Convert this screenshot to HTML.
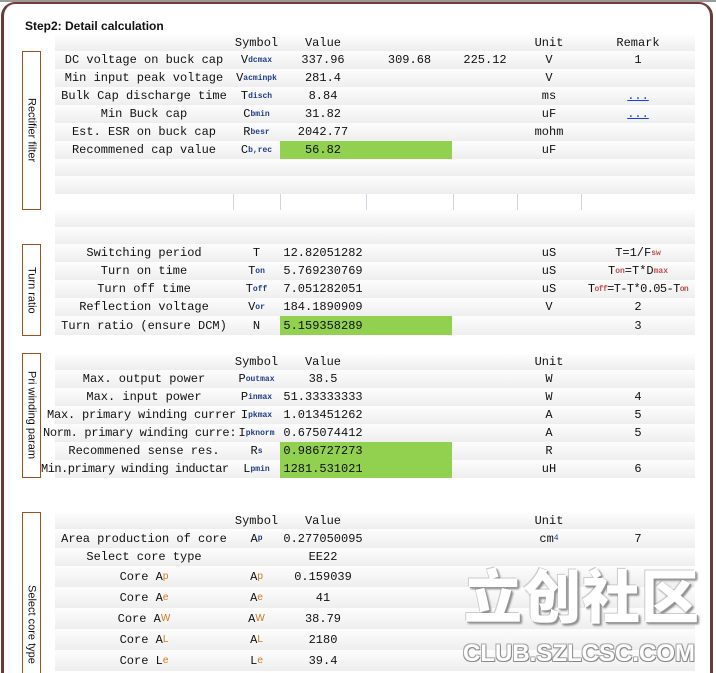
<!DOCTYPE html>
<html><head><meta charset="utf-8">
<style>
*{margin:0;padding:0;box-sizing:border-box}
html,body{width:716px;height:673px;overflow:hidden}
body{background:#fff;position:relative;font-family:"Liberation Mono","Noto Sans CJK SC",monospace;font-size:12px;color:#111}
.frame{position:absolute;left:0;top:0;width:716px;height:673px;border-top:2px solid #9a9a9a}
.win{position:absolute;left:1px;top:2px;width:712px;height:671px;border-left:3px solid #6b3a36;border-right:3px solid #6b3a36;border-top:2px solid #7a3a36;border-radius:14px 14px 0 0;background:#fff}
.title{position:absolute;left:25px;top:19px;font-family:"Liberation Sans",sans-serif;font-weight:bold;font-size:12px;color:#111}
.box{position:absolute;left:22px;width:19px;border:1px solid #a0501a;background:#fff;overflow:hidden;display:flex;justify-content:center;align-items:center}
.box span{writing-mode:vertical-rl;white-space:nowrap;font-family:"Liberation Sans",sans-serif;font-size:11px;color:#111}
.r{position:absolute;left:55px;width:640px;height:18px;background:linear-gradient(#fdfdfd,#eeeeee)}
.c{position:absolute;top:0;height:100%;display:flex;align-items:center;justify-content:center;white-space:nowrap}
.l{left:0;width:178px}.s{left:178px;width:47px}.v{left:225px;width:86px}.v2{left:311px;width:87px}.v3{left:398px;width:64px}.u{left:462px;width:64px}.k{left:526px;width:114px}
.ll{justify-content:flex-start;width:auto}
.g{position:absolute;left:225px;top:0;width:172px;height:100%;background:#92d050}
sub{font-size:8px;color:#1f3c88;font-weight:bold;vertical-align:-3px}
.cs sub{font-family:"Liberation Sans",sans-serif;font-weight:normal;font-size:10px;color:#d07a1a}
.rm sub{color:#c0504d}
a{color:#1a3fdc;text-decoration:underline}
.vl{position:absolute;top:0;width:1px;height:16px;background:#d0d6e0}
.wm{position:absolute;z-index:3;left:464px;top:560px;font-family:"Noto Sans CJK SC",sans-serif;font-weight:900;font-size:58px;color:#fff;letter-spacing:1px;text-shadow:1px 1px 0 #999,2px 2px 2px #777,-1px -1px 0 #ccc;line-height:66px}
.wm2{position:absolute;z-index:3;left:463px;top:640px;font-family:"Liberation Sans",sans-serif;font-weight:bold;font-size:24px;line-height:28px;color:#fff;text-shadow:1px 1px 0 #888,-1px -1px 0 #aaa,1px -1px 0 #aaa,-1px 1px 0 #999}
</style></head><body>
<div class="frame"></div>
<div class="win"></div>
<div class="title">Step2: Detail calculation</div>

<div class="box" style="top:51px;height:159px"><span>Rectifier filter</span></div>
<div class="box" style="top:244px;height:92px"><span>Turn ratio</span></div>
<div class="box" style="top:353px;height:125px"><span>Pri winding param</span></div>
<div class="box" style="top:512px;height:161px;border-bottom:none;align-items:flex-start;padding-top:72px"><span>Select core type</span></div>

<!-- section 1 -->
<div class="r" style="top:35px;height:16px"><div class="c s">Symbol</div><div class="c v">Value</div><div class="c u">Unit</div><div class="c k">Remark</div></div>
<div class="r" style="top:51px"><div class="c l">DC voltage on buck cap</div><div class="c s">V<sub>dcmax</sub></div><div class="c v">337.96</div><div class="c v2">309.68</div><div class="c v3">225.12</div><div class="c u">V</div><div class="c k">1</div></div>
<div class="r" style="top:69px"><div class="c l">Min input peak voltage</div><div class="c s">V<sub>acminpk</sub></div><div class="c v">281.4</div><div class="c u">V</div></div>
<div class="r" style="top:87px"><div class="c l">Bulk Cap discharge time</div><div class="c s">T<sub>disch</sub></div><div class="c v">8.84</div><div class="c u">ms</div><div class="c k"><a>...</a></div></div>
<div class="r" style="top:105px"><div class="c l">Min Buck cap</div><div class="c s">C<sub>bmin</sub></div><div class="c v">31.82</div><div class="c u">uF</div><div class="c k"><a>...</a></div></div>
<div class="r" style="top:123px"><div class="c l">Est. ESR on buck cap</div><div class="c s">R<sub>besr</sub></div><div class="c v">2042.77</div><div class="c u">mohm</div></div>
<div class="r" style="top:141px"><div class="g"></div><div class="c l">Recommened cap value</div><div class="c s">C<sub>b,rec</sub></div><div class="c v">56.82</div><div class="c u">uF</div></div>
<div class="r" style="top:159px;height:17px"></div>
<div class="r" style="top:176px;height:18px"></div>
<div class="r" style="top:194px;height:16px;background:#fff"><div class="vl" style="left:178px"></div><div class="vl" style="left:225px"></div><div class="vl" style="left:311px"></div><div class="vl" style="left:398px"></div><div class="vl" style="left:462px"></div><div class="vl" style="left:526px"></div></div>
<div class="r" style="top:210px;height:17px"></div>
<div class="r" style="top:227px;height:17px"></div>

<!-- section 2 -->
<div class="r" style="top:244px"><div class="c l">Switching period</div><div class="c s">T</div><div class="c v">12.82051282</div><div class="c u">uS</div><div class="c k rm">T=1/F<sub>sw</sub></div></div>
<div class="r" style="top:262px"><div class="c l">Turn on time</div><div class="c s">T<sub>on</sub></div><div class="c v">5.769230769</div><div class="c u">uS</div><div class="c k rm">T<sub>on</sub>=T*D<sub>max</sub></div></div>
<div class="r" style="top:280px"><div class="c l">Turn off time</div><div class="c s">T<sub>off</sub></div><div class="c v">7.051282051</div><div class="c u">uS</div><div class="c k rm" style="letter-spacing:-0.6px">T<sub>off</sub>=T-T*0.05-T<sub>on</sub></div></div>
<div class="r" style="top:298px"><div class="c l">Reflection voltage</div><div class="c s">V<sub>or</sub></div><div class="c v">184.1890909</div><div class="c u">V</div><div class="c k">2</div></div>
<div class="r" style="top:316px;height:19px"><div class="g"></div><div class="c l">Turn ratio (ensure DCM)</div><div class="c s">N</div><div class="c v">5.159358289</div><div class="c k">3</div></div>

<!-- section 3 -->
<div class="r" style="top:354px;height:16px"><div class="c s">Symbol</div><div class="c v">Value</div><div class="c u">Unit</div></div>
<div class="r" style="top:370px"><div class="c l">Max. output power</div><div class="c s">P<sub>outmax</sub></div><div class="c v">38.5</div><div class="c u">W</div></div>
<div class="r" style="top:388px"><div class="c l">Max. input power</div><div class="c s">P<sub>inmax</sub></div><div class="c v">51.33333333</div><div class="c u">W</div><div class="c k">4</div></div>
<div class="r" style="top:406px"><div class="c l ll" style="left:-8px;letter-spacing:-0.2px">Max. primary winding currer</div><div class="c s">I<sub>pkmax</sub></div><div class="c v">1.013451262</div><div class="c u">A</div><div class="c k">5</div></div>
<div class="r" style="top:424px"><div class="c l ll" style="left:-12px;letter-spacing:-0.3px">Norm. primary winding curre:</div><div class="c s">I<sub>pknorm</sub></div><div class="c v">0.675074412</div><div class="c u">A</div><div class="c k">5</div></div>
<div class="r" style="top:442px"><div class="g"></div><div class="c l">Recommened sense res.</div><div class="c s">R<sub>s</sub></div><div class="c v">0.986727273</div><div class="c u">R</div></div>
<div class="r" style="top:460px"><div class="g"></div><div class="c l ll" style="left:-14px;letter-spacing:-0.5px">Min.primary winding inductar</div><div class="c s">L<sub>pmin</sub></div><div class="c v">1281.531021</div><div class="c u">uH</div><div class="c k">6</div></div>

<!-- section 4 -->
<div class="r" style="top:513px;height:16px"><div class="c s">Symbol</div><div class="c v">Value</div><div class="c u">Unit</div></div>
<div class="r" style="top:529px;height:19px"><div class="c l">Area production of core</div><div class="c s">A<sub>p</sub></div><div class="c v">0.277050095</div><div class="c u">cm<sup style="font-size:8px;color:#1f3c88">4</sup></div><div class="c k">7</div></div>
<div class="r" style="top:548px"><div class="c l">Select core type</div><div class="c v">EE22</div></div>
<div class="r cs" style="top:566px;height:21px"><div class="c l">Core A<sub>p</sub></div><div class="c s">A<sub>p</sub></div><div class="c v">0.159039</div></div>
<div class="r cs" style="top:587px;height:21px"><div class="c l">Core A<sub>e</sub></div><div class="c s">A<sub>e</sub></div><div class="c v">41</div></div>
<div class="r cs" style="top:608px;height:21px"><div class="c l">Core A<sub>W</sub></div><div class="c s">A<sub>W</sub></div><div class="c v">38.79</div></div>
<div class="r cs" style="top:629px;height:21px"><div class="c l">Core A<sub>L</sub></div><div class="c s">A<sub>L</sub></div><div class="c v">2180</div></div>
<div class="r cs" style="top:650px;height:21px"><div class="c l">Core L<sub>e</sub></div><div class="c s">L<sub>e</sub></div><div class="c v">39.4</div></div>

<div class="wm">立创社区</div>
<div class="wm2">CLUB.SZLCSC.COM</div>
</body></html>
